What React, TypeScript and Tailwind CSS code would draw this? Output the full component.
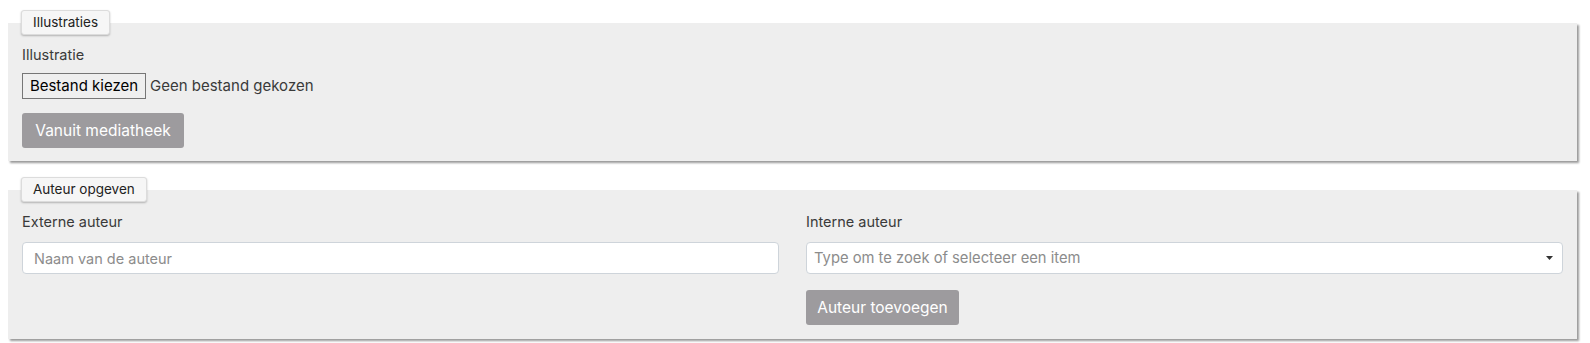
const font = { fontFamily: 'Inter, "Open Sans", sans-serif' };

const Legend = ({ label }: { label: string }) => (
  <div className="relative z-10 ml-[21px] flex h-[25px] w-fit items-center rounded-[3px] border border-[#dcdcdc] bg-[#f6f6f6] px-[11px] text-[13.5px] text-[#222] shadow-[0_1px_2px_rgba(0,0,0,0.25)]">
    {label}
  </div>
);

const GreyButton = ({ children, className = '' }: { children: string; className?: string }) => (
  <button
    type="button"
    className={`flex h-[35px] items-center justify-center rounded-[3px] bg-[#9d9b9e] text-[15.5px] text-white ${className}`}
  >
    {children}
  </button>
);

export default function App() {
  return (
    <div className="min-h-[343px] bg-white pt-[10px] text-[#3a3a3a]" style={font}>
      {/* Illustraties */}
      <Legend label="Illustraties" />
      <div className="ml-[8px] mr-[13px] -mt-[12px] bg-[#eeeeee] px-[14px] pt-[22px] pb-[13px] shadow-[2px_2px_2px_rgba(0,0,0,0.4)]">
        <div className="h-[20px] text-[14.5px] leading-[20px]">Illustratie</div>
        <div className="mt-[8px] flex h-[26px] items-center">
          <div className="flex h-[26px] w-[124px] items-center justify-center border border-[#767676] bg-[#efefef] text-[15px] text-black">
            Bestand kiezen
          </div>
          <span className="ml-[4px] text-[15px]">Geen bestand gekozen</span>
        </div>
        <GreyButton className="mt-[14px] w-[162px]">Vanuit mediatheek</GreyButton>
      </div>

      {/* Auteur */}
      <div className="mt-[16px]">
        <Legend label="Auteur opgeven" />
      </div>
      <div className="ml-[8px] mr-[13px] -mt-[12px] bg-[#eeeeee] px-[14px] pt-[22px] pb-[14px] shadow-[2px_2px_2px_rgba(0,0,0,0.4)]">
        <div className="grid grid-cols-2 gap-x-[27px]">
          <div>
            <div className="h-[20px] text-[14.5px] leading-[20px]">Externe auteur</div>
            <input
              className="mt-[10px] h-[32px] w-full rounded-[4px] border border-[#ced4da] bg-white px-[11px] text-[14.5px] outline-none placeholder:text-[#8c8c8c]"
              placeholder="Naam van de auteur"
            />
          </div>
          <div>
            <div className="h-[20px] text-[14.5px] leading-[20px]">Interne auteur</div>
            <div className="mt-[10px] flex h-[32px] w-full items-center justify-between rounded-[4px] border border-[#ced4da] bg-white pl-[7px] pr-[9px] text-[14.75px] text-[#8c8c8c]">
              <span>Type om te zoek of selecteer een item</span>
              <svg width="7" height="4" viewBox="0 0 7 4">
                <path d="M0 0h7L3.5 4z" fill="#333" />
              </svg>
            </div>
            <GreyButton className="mt-[16px] h-[34px] w-[153px]">Auteur toevoegen</GreyButton>
          </div>
        </div>
      </div>
    </div>
  );
}
